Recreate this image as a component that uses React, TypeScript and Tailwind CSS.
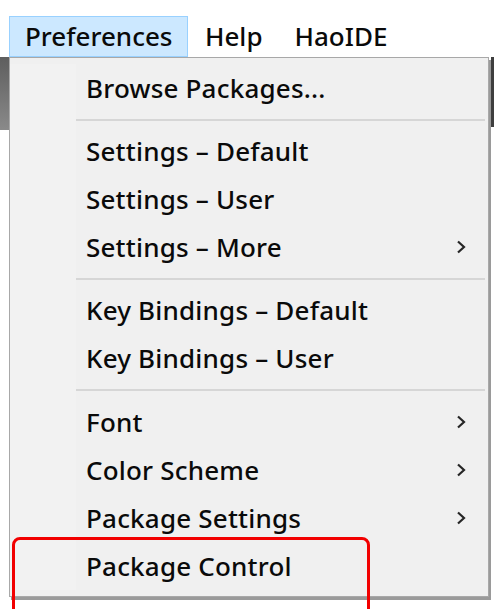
import { type ReactNode } from 'react'

const font = { fontFamily: '"Noto Sans", "Open Sans", sans-serif' }

function Chevron() {
  return (
    <svg width="12" height="16" viewBox="0 0 12 16" className="text-[#262626]">
      <path d="M3 2.5 L9 8 L3 13.5" fill="none" stroke="currentColor" strokeWidth="2.2" />
    </svg>
  )
}

function Item({ label, sub }: { label: string; sub?: boolean }) {
  return (
    <div className="h-[48px] flex items-center">
      <div className="w-[66px] self-stretch bg-[#f2f2f2]" />
      <div className="flex-1 flex items-center justify-between pl-[10px] pr-[21px] text-[26px] font-medium tracking-[0.2px] text-[#0a0a0a]">
        <span>{label}</span>
        {sub && <Chevron />}
      </div>
    </div>
  )
}

function Sep({ h }: { h: string }) {
  return (
    <div className={`flex items-center ${h}`}>
      <div className="w-[66px] self-stretch bg-[#f2f2f2]" />
      <div className="flex-1 mr-[3px] h-[2px] bg-[#d6d6d6]" />
    </div>
  )
}

function Group({ children }: { children: ReactNode }) {
  return <div className="flex flex-col">{children}</div>
}

export default function App() {
  return (
    <div className="relative w-[494px] h-[609px] bg-white overflow-hidden" style={font}>
      <div className="h-[15px]" />

      {/* menu bar */}
      <div className="h-[42px] flex items-center text-[26px] font-medium text-[#0a0a0a]">
        <div className="ml-[9px] w-[179px] h-[41px] bg-[#cce8ff] border border-[#99d1ff] flex items-center pl-[15px]">
          Preferences
        </div>
        <span className="ml-[17px]">Help</span>
        <span className="ml-[32px]">HaoIDE</span>
      </div>

      <div className="flex">
        <div className="w-[9px] h-[73px] bg-gradient-to-b from-[#5e5e5e] to-[#8a8a8a]" />
        <div className="flex flex-col">
          <div className="w-[480px] bg-[#f0f0f0] border border-[#a8a8a8] pt-[6px] pb-[6px] shadow-[2px_3px_0_#9a9a9a]">
            <Group>
              <Item label="Browse Packages..." />
            </Group>
            <Sep h="h-[15px]" />
            <Group>
              <Item label="Settings – Default" />
              <Item label="Settings – User" />
              <Item label="Settings – More" sub />
            </Group>
            <Sep h="h-[15px]" />
            <Group>
              <Item label="Key Bindings – Default" />
              <Item label="Key Bindings – User" />
            </Group>
            <Sep h="h-[16px]" />
            <Group>
              <Item label="Font" sub />
              <Item label="Color Scheme" sub />
              <Item label="Package Settings" sub />
              <Item label="Package Control" />
            </Group>
          </div>
        </div>
        <div className="ml-[2px] w-[3px] h-[70px] bg-[#3e3e3e]" />
      </div>

      {/* annotation box */}
      <div className="absolute left-[12px] top-[537px] w-[358px] h-[100px] border-[3px] border-[#f20000] rounded-t-[8px]" />
    </div>
  )
}
